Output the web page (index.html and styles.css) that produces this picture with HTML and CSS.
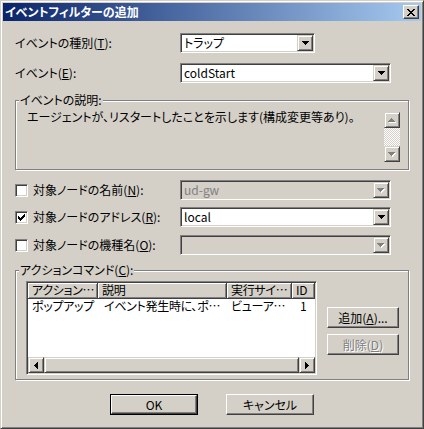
FILE: index.html
```html
<!DOCTYPE html>
<html lang="ja">
<head>
<meta charset="utf-8">
<title>イベントフィルターの追加</title>
<link rel="stylesheet" href="styles.css">
</head>
<body>
<div class="window">
  <div class="titlebar">
    <span class="title">イベントフィルターの追加</span>
    <span class="close"><svg width="8" height="7" viewBox="0 0 8 7"><path d="M0 0h2v1h-2zM6 0h2v1h-2zM1 1h2v1h-2zM5 1h2v1h-2zM2 2h4v1h-4zM3 3h2v1h-2zM2 4h4v1h-4zM1 5h2v1h-2zM5 5h2v1h-2zM0 6h2v1h-2zM6 6h2v1h-2z" fill="#000"/></svg></span>
  </div>
  <div class="content">
    <div class="row r1">
      <span class="lbl">イベントの種別(<u>T</u>):</span>
      <div class="combo w135"><span class="val">トラップ</span><span class="dd"><svg width="7" height="4" viewBox="0 0 7 4"><path d="M0 0h7v1h-7zM1 1h5v1h-5zM2 2h3v1h-3zM3 3h1v1h-1z" fill="#000"/></svg></span></div>
    </div>
    <div class="row r2">
      <span class="lbl">イベント(<u>E</u>):</span>
      <div class="combo w211"><span class="val">coldStart</span><span class="dd"><svg width="7" height="4" viewBox="0 0 7 4"><path d="M0 0h7v1h-7zM1 1h5v1h-5zM2 2h3v1h-3zM3 3h1v1h-1z" fill="#000"/></svg></span></div>
    </div>
    <fieldset class="group g1">
      <legend>イベントの説明:</legend>
      <div class="desc">
        <div class="desc-text">エージェントが、リスタートしたことを示します(構成変更等あり)。</div>
        <div class="vscroll">
          <span class="sbtn"><svg width="8" height="5" viewBox="0 0 8 5"><path d="M4 1h1v1h-1zM3 2h3v1h-3zM2 3h5v1h-5zM1 4h7v1h-7z" fill="#fff"/><path d="M3 0h1v1h-1zM2 1h3v1h-3zM1 2h5v1h-5zM0 3h7v1h-7z" fill="#808080"/></svg></span>
          <span class="track"></span>
          <span class="sbtn"><svg width="8" height="5" viewBox="0 0 8 5"><path d="M1 1h7v1h-7zM2 2h5v1h-5zM3 3h3v1h-3zM4 4h1v1h-1z" fill="#fff"/><path d="M0 0h7v1h-7zM1 1h5v1h-5zM2 2h3v1h-3zM3 3h1v1h-1z" fill="#808080"/></svg></span>
        </div>
      </div>
    </fieldset>
    <div class="row r3">
      <span class="lbl chk"><span class="cb"></span>対象ノードの名前(<u>N</u>):</span>
      <div class="combo w211 disabled"><span class="val">ud-gw</span><span class="dd"><svg width="8" height="5" viewBox="0 0 8 5"><path d="M1 1h7v1h-7zM2 2h5v1h-5zM3 3h3v1h-3zM4 4h1v1h-1z" fill="#fff"/><path d="M0 0h7v1h-7zM1 1h5v1h-5zM2 2h3v1h-3zM3 3h1v1h-1z" fill="#808080"/></svg></span></div>
    </div>
    <div class="row r4">
      <span class="lbl chk"><span class="cb"><svg width="7" height="7" viewBox="0 0 7 7"><path d="M6 0h1v3h-1zM5 1h1v3h-1zM4 2h1v3h-1zM3 3h1v3h-1zM2 4h1v3h-1zM1 3h1v3h-1zM0 2h1v3h-1z" fill="#000"/></svg></span>対象ノードのアドレス(<u>R</u>):</span>
      <div class="combo w211"><span class="val">local</span><span class="dd"><svg width="7" height="4" viewBox="0 0 7 4"><path d="M0 0h7v1h-7zM1 1h5v1h-5zM2 2h3v1h-3zM3 3h1v1h-1z" fill="#000"/></svg></span></div>
    </div>
    <div class="row r5">
      <span class="lbl chk"><span class="cb"></span>対象ノードの機種名(<u>O</u>):</span>
      <div class="combo w211 disabled"><span class="val"></span><span class="dd"><svg width="8" height="5" viewBox="0 0 8 5"><path d="M1 1h7v1h-7zM2 2h5v1h-5zM3 3h3v1h-3zM4 4h1v1h-1z" fill="#fff"/><path d="M0 0h7v1h-7zM1 1h5v1h-5zM2 2h3v1h-3zM3 3h1v1h-1z" fill="#808080"/></svg></span></div>
    </div>
    <fieldset class="group g2">
      <legend>アクションコマンド(<u>C</u>):</legend>
      <div class="actions">
        <div class="listview">
          <div class="lv-head">
            <span class="hc c1">アクション…</span>
            <span class="hc c2">説明</span>
            <span class="hc c3">実行サイ…</span>
            <span class="hc c4">ID</span>
          </div>
          <div class="lv-body">
            <div class="lv-row">
              <span class="cell c1">ポップアップ</span>
              <span class="cell c2">イベント発生時に、ポ…</span>
              <span class="cell c3">ビューア…</span>
              <span class="cell c4">1</span>
            </div>
          </div>
          <div class="hscroll">
            <span class="sbtn"><svg width="4" height="7" viewBox="0 0 4 7"><path d="M3 0h1v7h-1zM2 1h1v5h-1zM1 2h1v3h-1zM0 3h1v1h-1z" fill="#000"/></svg></span>
            <span class="thumb"></span>
            <span class="sbtn"><svg width="4" height="7" viewBox="0 0 4 7"><path d="M0 0h1v7h-1zM1 1h1v5h-1zM2 2h1v3h-1zM3 3h1v1h-1z" fill="#000"/></svg></span>
          </div>
        </div>
        <div class="side-buttons">
          <span class="btn small">追加(<u>A</u>)...</span>
          <span class="btn small disabled">削除(<u>D</u>)</span>
        </div>
      </div>
    </fieldset>
    <div class="footer">
      <span class="btn big default"><span class="btn-inner">OK</span></span>
      <span class="btn big">キャンセル</span>
    </div>
  </div>
</div>
</body>
</html>
```
FILE: styles.css
```css
* { box-sizing: border-box; }

body {
  margin: 0;
  background: #d4d0c8;
  font-family: "Noto Sans CJK JP", "Liberation Sans", sans-serif;
  font-size: 12px;
  line-height: 14px;
  font-feature-settings: "palt";
  color: #000;
}

u { text-decoration: underline; text-underline-offset: 1px; }

.window {
  width: 424px;
  height: 429px;
  border: 1px solid;
  border-color: #d4d0c8 #404040 #404040 #d4d0c8;
  box-shadow: inset 1px 1px #fff, inset -1px -1px #808080;
  padding: 2px;
  display: flex;
  flex-direction: column;
}

.titlebar {
  height: 18px;
  flex: none;
  display: flex;
  align-items: center;
  padding: 0 2px 0 2px;
  background: linear-gradient(to right, #0a246a, #a6caf0);
  color: #fff;
  font-weight: bold;
}
.title { flex: 1; line-height: 18px; }

.close {
  width: 16px;
  height: 14px;
  display: flex;
  align-items: center;
  justify-content: center;
  background: #d4d0c8;
  border: 1px solid;
  border-color: #fff #404040 #404040 #fff;
  box-shadow: inset -1px -1px #808080;
}

.content {
  padding: 0 12px;
  display: flex;
  flex-direction: column;
}

.row {
  display: flex;
  align-items: center;
  height: 20px;
}
.r1 { margin-top: 12px; }
.r2 { margin-top: 10px; }
.r3 { margin-top: 10px; }
.r4 { margin-top: 7px; }
.r5 { margin-top: 8px; }

.lbl { width: 165px; flex: none; white-space: nowrap; }
.chk { display: flex; align-items: center; }

.cb {
  width: 13px;
  height: 13px;
  margin: 1px 5px 0 0;
  background: #fff;
  border: 1px solid;
  border-color: #808080 #fff #fff #808080;
  box-shadow: inset 1px 1px #404040, inset -1px -1px #d4d0c8;
  display: flex;
  align-items: center;
  justify-content: center;
}

.combo {
  height: 20px;
  display: flex;
  background: #fff;
  border: 1px solid;
  border-color: #808080 #fff #fff #808080;
  box-shadow: inset 1px 1px #404040, inset -1px -1px #d4d0c8;
  padding: 1px;
}
.w135 { width: 135px; }
.w211 { width: 211px; }
.combo .val { flex: 1; padding-left: 2px; line-height: 16px; white-space: nowrap; }
.combo.disabled { background: #d4d0c8; color: #808080; }

.dd, .sbtn {
  width: 16px;
  height: 16px;
  flex: none;
  display: flex;
  align-items: center;
  justify-content: center;
  background: #d4d0c8;
  border: 1px solid;
  border-color: #d4d0c8 #404040 #404040 #d4d0c8;
  box-shadow: inset 1px 1px #fff, inset -1px -1px #808080;
}

.group {
  margin: 0;
  padding: 0;
  min-inline-size: 0;
  border: 1px solid #808080;
  box-shadow: 1px 1px 0 #fff, inset 1px 1px 0 #fff;
}
.group legend {
  margin-left: 3px;
  padding: 0 1px;
  line-height: 14px;
  background: #d4d0c8;
}
.g1 { margin-top: 10px; }
.g2 { margin-top: 8px; }

.desc {
  display: flex;
  padding: 3px 8px 7px 11px;
}
.desc-text { flex: 1; white-space: nowrap; }
.vscroll {
  width: 16px;
  margin-top: 2px;
  display: flex;
  flex-direction: column;
}
.track {
  height: 18px;
  background: repeating-conic-gradient(#fff 0 25%, #d4d0c8 0 50%) 0 0 / 2px 2px;
}

.actions {
  display: flex;
  padding: 4px 9px 4px 10px;
}

.listview {
  width: 291px;
  height: 94px;
  flex: none;
  display: flex;
  flex-direction: column;
  background: #fff;
  border: 1px solid;
  border-color: #808080 #fff #fff #808080;
  box-shadow: inset 1px 1px #404040, inset -1px -1px #d4d0c8;
  padding: 1px;
}
.lv-head, .lv-row { display: flex; white-space: nowrap; letter-spacing: -0.3px; }
.lv-head { height: 16px; flex: none; }
.hc {
  flex: none;
  height: 16px;
  line-height: 14px;
  padding-left: 4px;
  background: #d4d0c8;
  border-right: 1px solid #404040;
  border-bottom: 1px solid #404040;
  box-shadow: inset 1px 1px #fff, inset -1px -1px #808080;
}
.c1 { width: 70px; }
.c2 { width: 129px; }
.c3 { width: 65px; }
.c4 { width: 23px; }
.lv-body { flex: 1; }
.cell { flex: none; padding-left: 4px; line-height: 14px; }
.cell.c2 { padding-left: 6px; }
.cell.c4 { padding-left: 8px; }

.hscroll { display: flex; height: 16px; flex: none; }
.thumb {
  flex: 1;
  background: #d4d0c8;
  border: 1px solid;
  border-color: #d4d0c8 #404040 #404040 #d4d0c8;
  box-shadow: inset 1px 1px #fff, inset -1px -1px #808080;
}

.side-buttons {
  margin-left: 10px;
  margin-top: 26px;
  display: flex;
  flex-direction: column;
  gap: 6px;
}

.btn {
  display: flex;
  align-items: center;
  justify-content: center;
  height: 21px;
  background: #d4d0c8;
  border: 1px solid;
  border-color: #fff #404040 #404040 #fff;
  box-shadow: inset -1px -1px #808080;
  white-space: nowrap;
}
.btn.small { width: 72px; }
.btn.big { width: 88px; }
.btn.disabled { color: #808080; text-shadow: 1px 1px #fff; }
.btn.default {
  border: 1px solid #000;
  box-shadow: none;
  padding: 0;
}
.btn-inner {
  width: 100%;
  height: 100%;
  display: flex;
  align-items: center;
  justify-content: center;
  border: 1px solid;
  border-color: #fff #404040 #404040 #fff;
  box-shadow: inset -1px -1px #808080;
}

.footer {
  margin-top: 14px;
  display: flex;
  justify-content: center;
  gap: 28px;
}
```
